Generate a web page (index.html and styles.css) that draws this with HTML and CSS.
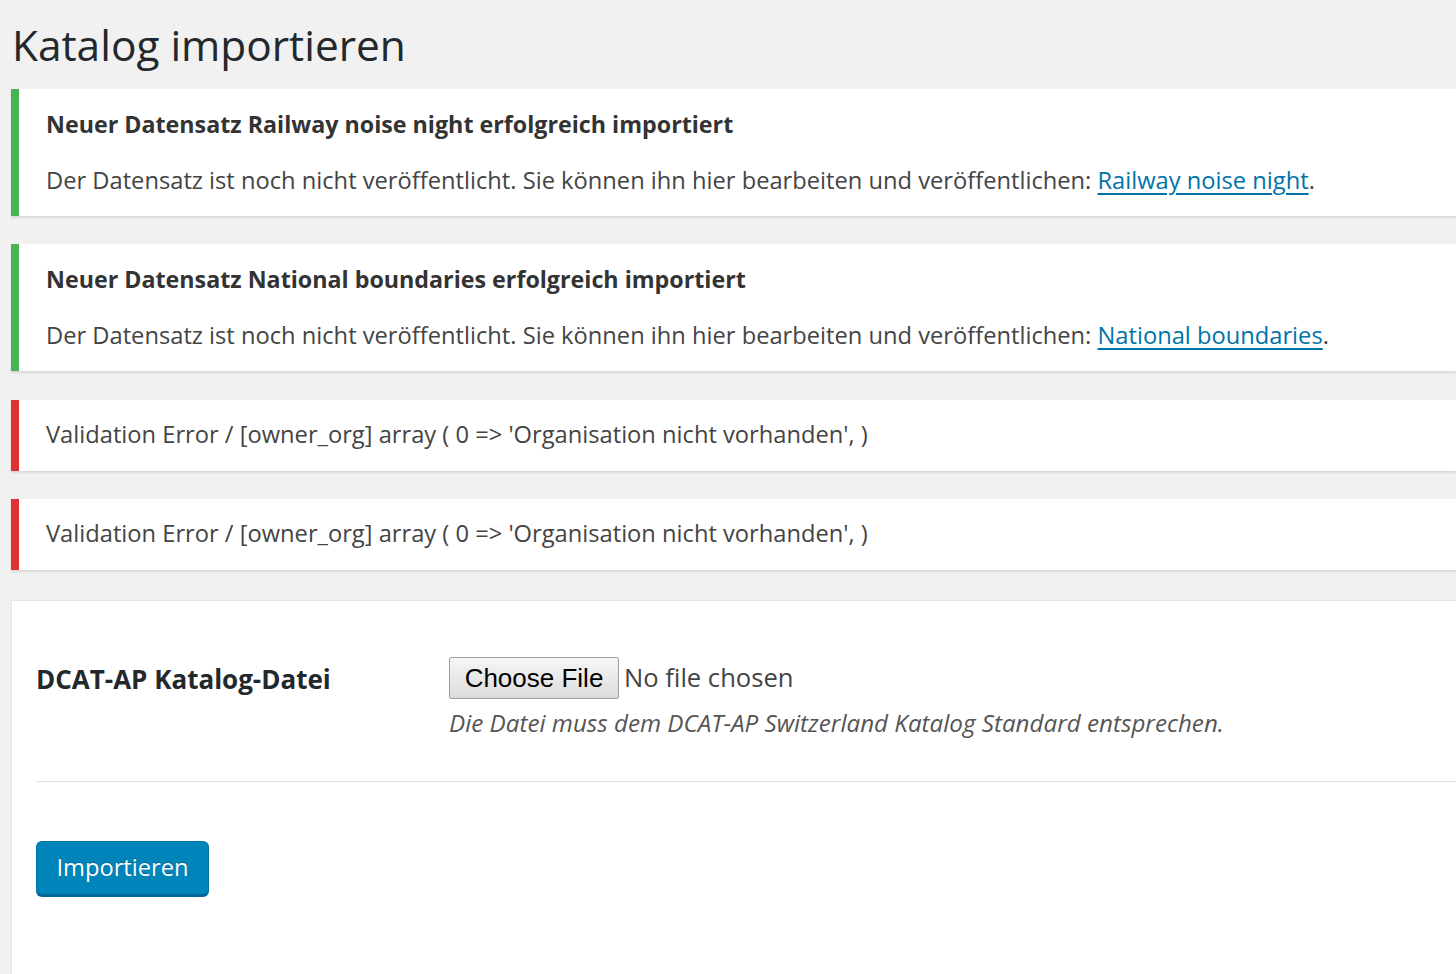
FILE: index.html
```html
<!DOCTYPE html>
<html lang="de">
<head>
<meta charset="utf-8">
<title>Katalog importieren</title>
<link rel="stylesheet" href="styles.css">
</head>
<body>
<div class="wrap">
  <h1 class="page-title">Katalog importieren</h1>

  <div class="notice notice-success">
    <p class="notice-title"><strong>Neuer Datensatz Railway noise night erfolgreich importiert</strong></p>
    <p class="notice-text">Der Datensatz ist noch nicht veröffentlicht. Sie können ihn hier bearbeiten und veröffentlichen: <a href="#">Railway noise night</a>.</p>
  </div>

  <div class="notice notice-success">
    <p class="notice-title"><strong>Neuer Datensatz National boundaries erfolgreich importiert</strong></p>
    <p class="notice-text">Der Datensatz ist noch nicht veröffentlicht. Sie können ihn hier bearbeiten und veröffentlichen: <a href="#">National boundaries</a>.</p>
  </div>

  <div class="notice notice-error notice-gap">
    <p class="notice-single">Validation Error / [owner_org] array ( 0 =&gt; 'Organisation nicht vorhanden', )</p>
  </div>

  <div class="notice notice-error">
    <p class="notice-single">Validation Error / [owner_org] array ( 0 =&gt; 'Organisation nicht vorhanden', )</p>
  </div>

  <form class="card">
    <div class="form-row">
      <label class="form-label" for="file">DCAT-AP Katalog-Datei</label>
      <div class="form-field">
        <input class="file-input" type="file" id="file">
        <p class="description">Die Datei muss dem DCAT-AP Switzerland Katalog Standard entsprechen.</p>
      </div>
    </div>
    <div class="divider"></div>
    <button class="button-primary" type="button">Importieren</button>
  </form>
</div>
</body>
</html>
```

FILE: styles.css
```css
html, body {
  margin: 0;
  padding: 0;
  background: #f1f1f1;
}

body {
  font-family: "Open Sans", "Noto Sans", sans-serif;
  color: #444;
  overflow: hidden;
  height: 974px;
}

.wrap {
  padding-left: 11px;
}

.page-title {
  margin: 0;
  padding: 17px 0 0 1px;
  font-size: 42.4px;
  line-height: 56px;
  font-weight: 400;
  color: #23282d;
  margin-bottom: 16px;
}

.notice {
  background: #fff;
  border-left: 8px solid #46b450;
  box-shadow: 0 2px 2px rgba(0, 0, 0, 0.1);
  padding: 0 0 0 27px;
  margin-bottom: 28px;
}

.notice-gap {
  margin-top: 29px;
}

.notice-error {
  border-left-color: #dc3232;
}

.notice-success {
  padding-top: 19px;
  padding-bottom: 20px;
}

.notice p {
  margin: 0;
  font-size: 23.7px;
  line-height: 32px;
}

.notice-title {
  margin-bottom: 24px !important;
  color: #23282d;
}

.notice-title strong {
  font-size: 23.25px;
  font-weight: 700;
  color: #333;
}

.notice-error {
  padding-top: 18px;
  padding-bottom: 21px;
}

.notice a {
  color: #0073aa;
  text-decoration: underline;
  text-underline-offset: 4px;
}

.card {
  background: #fff;
  border: 1px solid #e5e5e5;
  border-right: none;
  border-bottom: none;
  padding: 56px 0 0 24px;
  margin-top: 30px;
  height: 374px;
  box-sizing: border-box;
}

.form-row {
  display: flex;
  align-items: flex-start;
}

.form-label {
  width: 413px;
  flex: none;
  margin-top: 4px;
  font-size: 26px;
  line-height: 36px;
  font-weight: 700;
  color: #23282d;
}

.form-field {
  flex: 1;
}

.file-input {
  display: block;
  font-family: "Open Sans", sans-serif;
  font-size: 25.6px;
  color: #444;
  height: 42px;
  padding: 0;
  margin: 0;
}

.file-input::file-selector-button {
  font-family: "Liberation Sans", Arial, sans-serif;
  font-size: 26px;
  color: #000;
  height: 42px;
  width: 170px;
  margin: 0 5px 0 0;
  padding: 0;
  border: 1px solid #a0a0a0;
  border-radius: 2px;
  background: linear-gradient(#f6f6f6, #dcdcdc);
}

.description {
  margin: 6px 0 0;
  font-style: italic;
  font-size: 24.2px;
  line-height: 36px;
  color: #555;
}

.divider {
  height: 1px;
  background: #e1e1e1;
  margin-top: 40px;
}

.button-primary {
  display: block;
  margin-top: 59px;
  width: 173px;
  height: 54px;
  padding: 0 0 2px;
  font-family: "Open Sans", sans-serif;
  font-size: 23.7px;
  color: #fff;
  background: #0085ba;
  border: 1px solid #0073aa;
  border-bottom-color: #006799;
  border-radius: 6px;
  box-shadow: 0 2px 0 #006799;
  text-shadow: 0 -1px 1px #006799;
  cursor: pointer;
}
```
